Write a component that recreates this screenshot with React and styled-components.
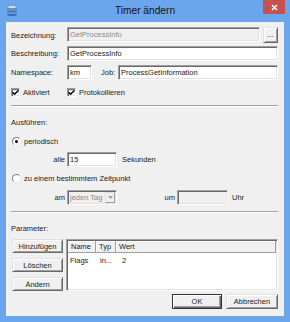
import React from "react";
import styled, { createGlobalStyle } from "styled-components";

const Global = createGlobalStyle`
  html, body { margin: 0; padding: 0; background: #fff; }
  body { width: 290px; height: 322px; overflow: hidden; font-family: "Liberation Sans", Arial, sans-serif; }
  * { box-sizing: border-box; }
`;

const Window = styled.div`
  width: 290px;
  height: 322px;
  background: #6ba6ec;
  display: flex;
  flex-direction: column;
`;

const TitleBar = styled.div`
  height: 22px;
  display: grid;
  grid-template-columns: 1fr auto 1fr;
  align-items: start;
`;

const AppIcon = styled.svg`
  margin: 5px 0 0 7px;
  display: block;
`;

const Title = styled.div`
  font-size: 10.2px;
  line-height: 12px;
  margin-top: 5px;
  color: #111;
`;

const CloseBtn = styled.div`
  justify-self: end;
  margin-right: 5px;
  width: 22px;
  height: 14px;
  background: #c75050;
  display: flex;
  align-items: center;
  justify-content: center;
`;

const Client = styled.div`
  margin: 0 6px 6px 6px;
  height: 294px;
  background: #f0f0f0;
  padding: 5px 6px 7px 5px;
  display: flex;
  flex-direction: column;
  font-size: 7.5px;
  color: #1a1a1a;
`;

const Row = styled.div`
  display: flex;
  align-items: center;
  height: ${(p) => p.$h}px;
  margin-top: ${(p) => p.$mt || 0}px;
  flex: none;
`;

const Label = styled.div`
  width: ${(p) => p.$w}px;
  flex: none;
  text-align: ${(p) => (p.$right ? "right" : "left")};
  padding-right: ${(p) => (p.$right ? 2 : 0)}px;
  margin-left: ${(p) => p.$ml || 0}px;
  white-space: nowrap;
`;

const Text = styled.span`
  margin-left: ${(p) => p.$ml || 0}px;
  white-space: nowrap;
`;

const Field = styled.input`
  height: 15px;
  width: ${(p) => (p.$w ? `${p.$w}px` : "auto")};
  flex: ${(p) => (p.$w ? "none" : "1 1 0")};
  min-width: 0;
  margin: 0;
  align-self: flex-start;
  font: inherit;
  font-size: 7.5px;
  color: ${(p) => (p.disabled ? "#8a8a8a" : "#1a1a1a")};
  background: ${(p) => (p.disabled ? "#f0f0f0" : "#fff")};
  border: 1px solid;
  border-color: #a0a0a0 #fff #fff #a0a0a0;
  box-shadow: inset 1px 1px 0 #696969, inset -1px -1px 0 #e3e3e3;
  padding: 0 2px;
  outline: none;
`;

const Button = styled.div`
  width: ${(p) => p.$w}px;
  height: ${(p) => p.$h}px;
  margin-left: ${(p) => p.$ml || 0}px;
  flex: none;
  align-self: flex-start;
  display: flex;
  align-items: ${(p) => (p.$bottom ? "flex-end" : "center")};
  justify-content: center;
  padding-bottom: ${(p) => (p.$bottom ? 3 : 0)}px;
  background: #f0f0f0;
  border: 1px solid;
  border-color: ${(p) => (p.$default ? "#333 #333 #333 #333" : "#e3e3e3 #696969 #696969 #e3e3e3")};
  box-shadow: ${(p) =>
    p.$default
      ? "inset 1px 1px 0 #fff, inset -1px -1px 0 #696969, inset -2px -2px 0 #a0a0a0"
      : "inset 1px 1px 0 #fff, inset -1px -1px 0 #a0a0a0"};
  white-space: nowrap;
`;

const CheckGroup = styled.div`
  width: ${(p) => (p.$w ? `${p.$w}px` : "auto")};
  flex: none;
  display: flex;
  align-items: center;
  margin-left: ${(p) => p.$ml || 0}px;
`;

const Box = styled.div`
  width: 9px;
  height: 9px;
  flex: none;
  background: #fff;
  border: 1px solid;
  border-color: #a0a0a0 #fff #fff #a0a0a0;
  box-shadow: inset 1px 1px 0 #696969, inset -1px -1px 0 #e3e3e3;
  display: flex;
  align-items: center;
  justify-content: center;
  margin-right: 3px;
`;

const Radio = styled.div`
  width: 9px;
  height: 9px;
  flex: none;
  border-radius: 50%;
  background: #fff;
  border: 1px solid;
  border-color: #808080 #e8e8e8 #e8e8e8 #808080;
  display: flex;
  align-items: center;
  justify-content: center;
  margin: 0 3px 0 1px;
  &::after {
    content: "";
    display: ${(p) => (p.$checked ? "block" : "none")};
    width: 3px;
    height: 3px;
    border-radius: 50%;
    background: #000;
  }
`;

const Separator = styled.div`
  height: 2px;
  flex: none;
  margin-top: ${(p) => p.$mt}px;
  border-top: 1px solid #a0a0a0;
  border-bottom: 1px solid #fff;
`;

const Select = styled.div`
  width: 50px;
  height: 15px;
  flex: none;
  align-self: flex-start;
  display: flex;
  align-items: center;
  justify-content: space-between;
  background: #f0f0f0;
  color: #8a8a8a;
  border: 1px solid;
  border-color: #a0a0a0 #fff #fff #a0a0a0;
  box-shadow: inset 1px 1px 0 #696969, inset -1px -1px 0 #e3e3e3;
  padding: 1px 1px 1px 2px;
  overflow: hidden;
  white-space: nowrap;
`;

const DropArrow = styled.div`
  width: 10px;
  height: 11px;
  flex: none;
  display: flex;
  align-items: center;
  justify-content: center;
  border: 1px solid;
  border-color: #e3e3e3 #a0a0a0 #a0a0a0 #e3e3e3;
`;

const Params = styled.div`
  display: flex;
  height: 52px;
  margin-top: 5px;
  flex: none;
`;

const ButtonColumn = styled.div`
  display: flex;
  flex-direction: column;
  gap: 5px;
  margin-left: 1px;
  width: 51px;
`;

const ListView = styled.div`
  flex: 1;
  margin-left: 3px;
  background: #fff;
  border: 1px solid;
  border-color: #a0a0a0 #fff #fff #a0a0a0;
  box-shadow: inset 1px 1px 0 #696969, inset -1px -1px 0 #e3e3e3;
  padding: 1px;
  display: flex;
  flex-direction: column;
`;

const HeaderRow = styled.div`
  display: flex;
  height: 12px;
`;

const HeaderCell = styled.div`
  width: ${(p) => (p.$w ? `${p.$w}px` : "auto")};
  flex: ${(p) => (p.$w ? "none" : "1")};
  background: #f0f0f0;
  border-right: 1px solid #a0a0a0;
  border-bottom: 1px solid #a0a0a0;
  box-shadow: inset 1px 1px 0 #fff;
  padding-left: 3px;
  line-height: 11px;
  white-space: nowrap;
`;

const DataRow = styled.div`
  display: flex;
  height: 12px;
  align-items: center;
  margin-top: 1px;
`;

const DataCell = styled.div`
  width: ${(p) => (p.$w ? `${p.$w}px` : "auto")};
  flex: ${(p) => (p.$w ? "none" : "1")};
  padding-left: 2px;
  white-space: nowrap;
`;

const Footer = styled.div`
  display: flex;
  justify-content: flex-end;
  gap: 4px;
  height: 15px;
  margin-top: 3px;
  flex: none;
`;

const Check = () => (
  <svg width="7" height="7" viewBox="0 0 7 7">
    <path d="M0.5 3.2 L2.6 5.3 L6.5 1.2" fill="none" stroke="#000" strokeWidth="1.4" />
  </svg>
);

export default function App() {
  return (
    <>
      <Global />
      <Window>
        <TitleBar>
          <AppIcon width="10" height="11" viewBox="0 0 10 11">
            <rect x="0.5" y="2" width="9" height="8" fill="#3c6fb8" />
            <rect x="0.5" y="4.5" width="9" height="1" fill="#8fb4e8" />
            <rect x="0.5" y="7.5" width="9" height="1" fill="#8fb4e8" />
            <ellipse cx="5" cy="10" rx="4.5" ry="1" fill="#3c6fb8" />
            <ellipse cx="5" cy="2" rx="4.5" ry="1.6" fill="#d8dde4" stroke="#6a7f9c" strokeWidth="0.5" />
          </AppIcon>
          <Title>Timer ändern</Title>
          <CloseBtn>
            <svg width="7" height="7" viewBox="0 0 7 7">
              <path d="M1 1 L6 6 M6 1 L1 6" stroke="#fff" strokeWidth="1.6" />
            </svg>
          </CloseBtn>
        </TitleBar>
        <Client>
          <Row $h={16}>
            <Label $w={56}>Bezeichnung:</Label>
            <Field disabled value="GetProcessInfo" readOnly />
            <Button $w={15} $h={16} $ml={3} $bottom>...</Button>
          </Row>
          <Row $h={15} $mt={3}>
            <Label $w={56}>Beschreibung:</Label>
            <Field value="GetProcessInfo" readOnly />
          </Row>
          <Row $h={15} $mt={4}>
            <Label $w={56}>Namespace:</Label>
            <Field $w={25} value="km" readOnly />
            <Label $w={17} $ml={9}>Job:</Label>
            <Field value="ProcessGetInformation" readOnly />
          </Row>
          <Row $h={12} $mt={6}>
            <CheckGroup $w={56}>
              <Box><Check /></Box>
              <Text>Aktiviert</Text>
            </CheckGroup>
            <CheckGroup>
              <Box><Check /></Box>
              <Text>Protokollieren</Text>
            </CheckGroup>
          </Row>
          <Separator $mt={7} />
          <Row $h={12} $mt={9}>
            <Text>Ausführen:</Text>
          </Row>
          <Row $h={12} $mt={7}>
            <Radio $checked />
            <Text>periodisch</Text>
          </Row>
          <Row $h={15} $mt={5}>
            <Label $w={56} $right>alle</Label>
            <Field $w={50} value="15" readOnly />
            <Text $ml={5}>Sekunden</Text>
          </Row>
          <Row $h={12} $mt={5}>
            <Radio />
            <Text>zu einem bestimmtem Zeitpunkt</Text>
          </Row>
          <Row $h={15} $mt={6}>
            <Label $w={56} $right>am</Label>
            <Select>
              <span>jeden Tag</span>
              <DropArrow>
                <svg width="5" height="3" viewBox="0 0 5 3">
                  <path d="M0 0 L5 0 L2.5 3 Z" fill="#a0a0a0" />
                </svg>
              </DropArrow>
            </Select>
            <Label $w={60} $right>um</Label>
            <Field $w={51} disabled value="" readOnly />
            <Text $ml={4}>Uhr</Text>
          </Row>
          <Separator $mt={6} />
          <Row $h={12} $mt={9}>
            <Text>Parameter:</Text>
          </Row>
          <Params>
            <ButtonColumn>
              <Button $w={51} $h={14}>Hinzufügen</Button>
              <Button $w={51} $h={14}>Löschen</Button>
              <Button $w={51} $h={14}>Ändern</Button>
            </ButtonColumn>
            <ListView>
              <HeaderRow>
                <HeaderCell $w={28}>Name</HeaderCell>
                <HeaderCell $w={20}>Typ</HeaderCell>
                <HeaderCell>Wert</HeaderCell>
              </HeaderRow>
              <DataRow>
                <DataCell $w={30}>Flags</DataCell>
                <DataCell $w={22}>in...</DataCell>
                <DataCell>2</DataCell>
              </DataRow>
            </ListView>
          </Params>
          <Footer>
            <Button $w={50} $h={15} $default>OK</Button>
            <Button $w={52} $h={15}>Abbrechen</Button>
          </Footer>
        </Client>
      </Window>
    </>
  );
}
